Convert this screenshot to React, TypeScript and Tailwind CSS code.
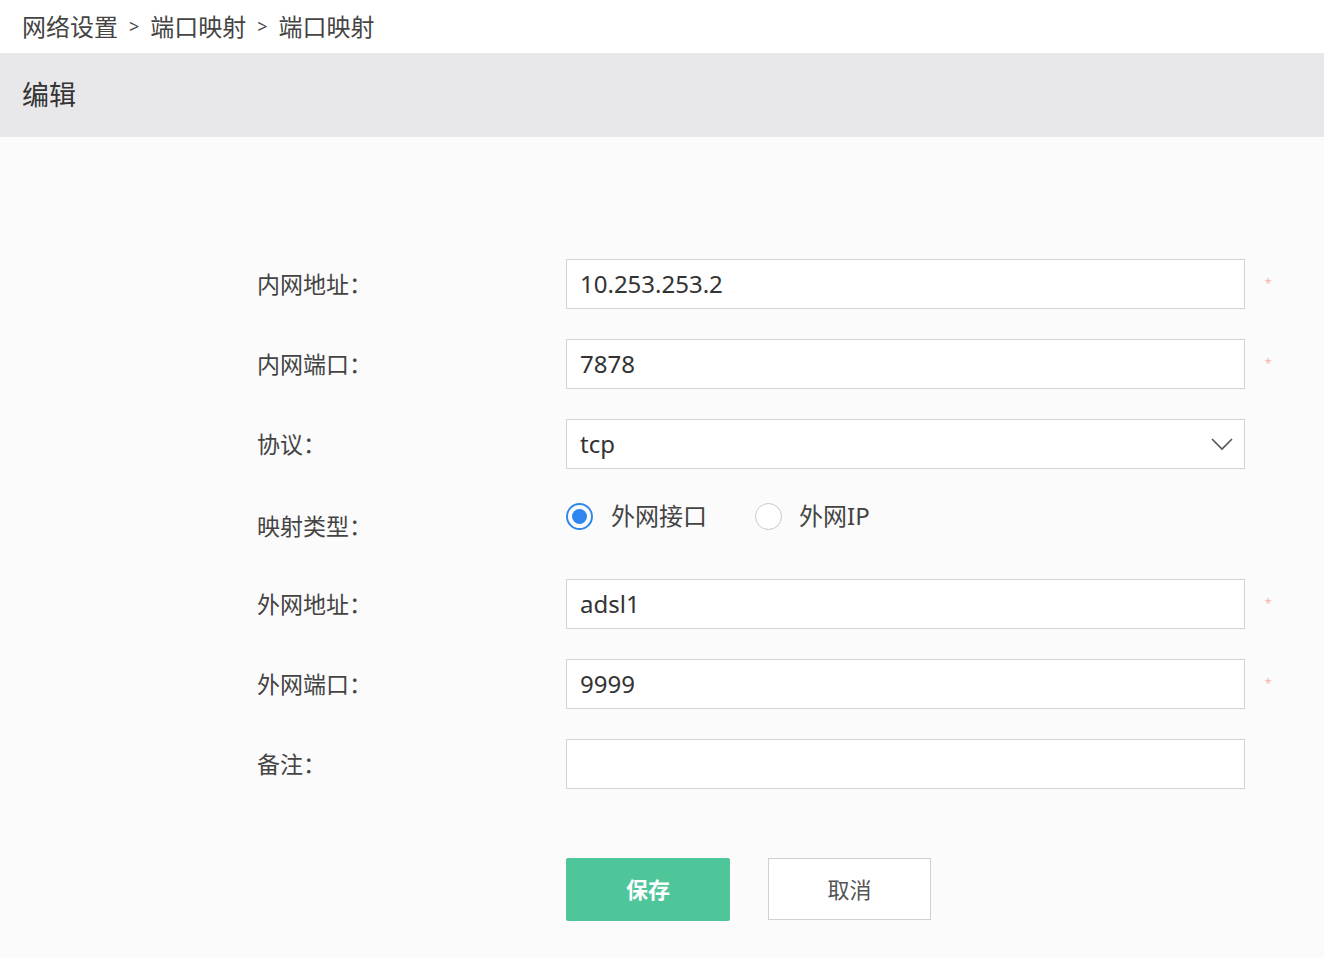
import React from "react";

const font = { fontFamily: '"Noto Sans", "Noto Sans CJK SC", sans-serif' };

function Field({ label, value, required }: { label: string; value: string; required?: boolean }) {
  return (
    <div className="flex items-center h-[50px]">
      <div className="w-[566px] pl-[257px] shrink-0 whitespace-nowrap text-[23px] text-[#444]">{label}</div>
      <div className="w-[679px] h-[50px] border border-[#d4d4d8] bg-white flex items-center px-[13px] text-[24px] text-[#333]">
        {value}
      </div>
      {required && <span className="ml-[20px] text-[12px] text-[#f6b6b0]">*</span>}
    </div>
  );
}

export default function App() {
  return (
    <div className="w-[1324px] h-[958px] bg-[#fbfbfb] overflow-hidden" style={font}>
      <div className="h-[53px] bg-white flex items-center pl-[22px] text-[24px] text-[#444] gap-[11px]">
        <span>网络设置</span>
        <span className="text-[18px]">&gt;</span>
        <span>端口映射</span>
        <span className="text-[18px]">&gt;</span>
        <span>端口映射</span>
      </div>
      <div className="h-[84px] bg-[#e8e8ea] flex items-center pl-[22px] text-[27px] text-[#333]">编辑</div>
      <div className="pt-[122px] flex flex-col gap-[30px]">
        <Field label="内网地址：" value="10.253.253.2" required />
        <Field label="内网端口：" value="7878" required />
        <div className="flex items-center h-[50px]">
          <div className="w-[566px] pl-[257px] shrink-0 whitespace-nowrap text-[23px] text-[#444]">协议：</div>
          <div className="w-[679px] h-[50px] border border-[#d4d4d8] bg-white flex items-center justify-between pl-[13px] pr-[10px] text-[24px] text-[#333]">
            <span>tcp</span>
            <svg width="24" height="14" viewBox="0 0 24 14" fill="none" stroke="#555" strokeWidth="1.6">
              <path d="M2 2l10 10L22 2" />
            </svg>
          </div>
        </div>
        <div className="flex items-start h-[50px]">
          <div className="w-[566px] pl-[257px] shrink-0 whitespace-nowrap text-[23px] text-[#444] pt-[10px]">映射类型：</div>
          <div className="flex items-center h-[34px] text-[24px] text-[#444]">
            <span className="w-[27px] h-[27px] rounded-full border-2 border-[#2f86f0] flex items-center justify-center">
              <span className="w-[15px] h-[15px] rounded-full bg-[#2f86f0]" />
            </span>
            <span className="ml-[18px]">外网接口</span>
            <span className="ml-[48px] w-[27px] h-[27px] rounded-full border border-[#c8c8cc] bg-white" />
            <span className="ml-[17px]">外网IP</span>
          </div>
        </div>
        <Field label="外网地址：" value="adsl1" required />
        <Field label="外网端口：" value="9999" required />
        <Field label="备注：" value="" />
      </div>
      <div className="flex pl-[566px] mt-[69px] gap-[38px]">
        <button className="w-[164px] h-[63px] bg-[#4fc59a] rounded-[2px] text-white text-[22px] font-bold">保存</button>
        <button className="w-[163px] h-[62px] bg-white border border-[#cfcfd4] text-[22px] text-[#555]">取消</button>
      </div>
    </div>
  );
}
